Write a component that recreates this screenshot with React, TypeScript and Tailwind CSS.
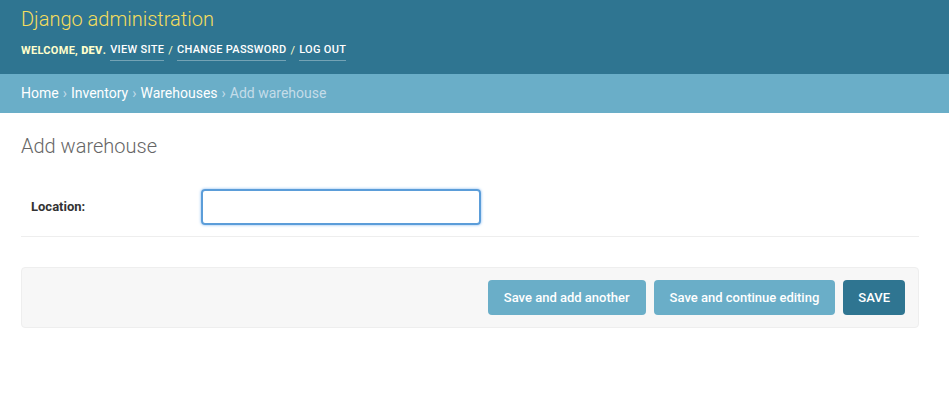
export default function App() {
    return (
        <div className="min-h-[412px] bg-white font-['Roboto','Liberation_Sans',sans-serif] text-[13px] text-[#333]">
            {/* header */}
            <div className="h-[74px] bg-[#2f7591] px-[21px] pt-[6px]">
                <div className="text-[20px] font-light leading-[26px] text-[#f5dd5d]">Django administration</div>
                <div className="mt-[10px] flex items-center gap-[4px] text-[11px] uppercase tracking-[0.3px] text-[#ffc]">
                    <span className="font-bold">Welcome, <strong>dev</strong>.</span>
                    <a className="border-b border-[#ffffff55] pb-[1px] font-medium text-white">View site</a>
                    <span>/</span>
                    <a className="border-b border-[#ffffff55] pb-[1px] font-medium text-white">Change password</a>
                    <span>/</span>
                    <a className="border-b border-[#ffffff55] pb-[1px] font-medium text-white">Log out</a>
                </div>
            </div>
            {/* breadcrumbs */}
            <div className="flex h-[39px] items-center px-[21px] bg-[#6aaec8] text-[14px] text-[#c4dce8]">
                <a className="text-white">Home</a>
                <span className="mx-[4px]">›</span>
                <a className="text-white">Inventory</a>
                <span className="mx-[4px]">›</span>
                <a className="text-white">Warehouses</a>
                <span className="mx-[4px]">›</span>
                <span>Add warehouse</span>
            </div>
            {/* content */}
            <div className="pl-[21px] pr-[30px] pt-[18px]">
                <h1 className="text-[20px] font-light text-[#666]">Add warehouse</h1>
                <div className="mt-[28px] flex items-center border-b border-[#eee] pb-[11px] pl-[10px]">
                    <label className="w-[170px] font-bold text-[#333]">Location:</label>
                    <input className="h-[36px] w-[280px] rounded-[4px] border-2 border-[#5b9dd9] shadow-[0_0_3px_#7fb5ef] outline-none" />
                </div>
                <div className="mt-[30px] flex h-[61px] items-center justify-end gap-[8px] rounded-[4px] border border-[#eee] bg-[#f7f7f7] pr-[13px]">
                    <button className="h-[35px] rounded-[4px] bg-[#6aaec8] px-[16px] font-medium text-white">Save and add another</button>
                    <button className="h-[35px] rounded-[4px] bg-[#6aaec8] px-[16px] font-medium text-white">Save and continue editing</button>
                    <button className="h-[35px] rounded-[4px] bg-[#2f7591] px-[15px] font-medium uppercase text-white">Save</button>
                </div>
            </div>
        </div>
    );
}
